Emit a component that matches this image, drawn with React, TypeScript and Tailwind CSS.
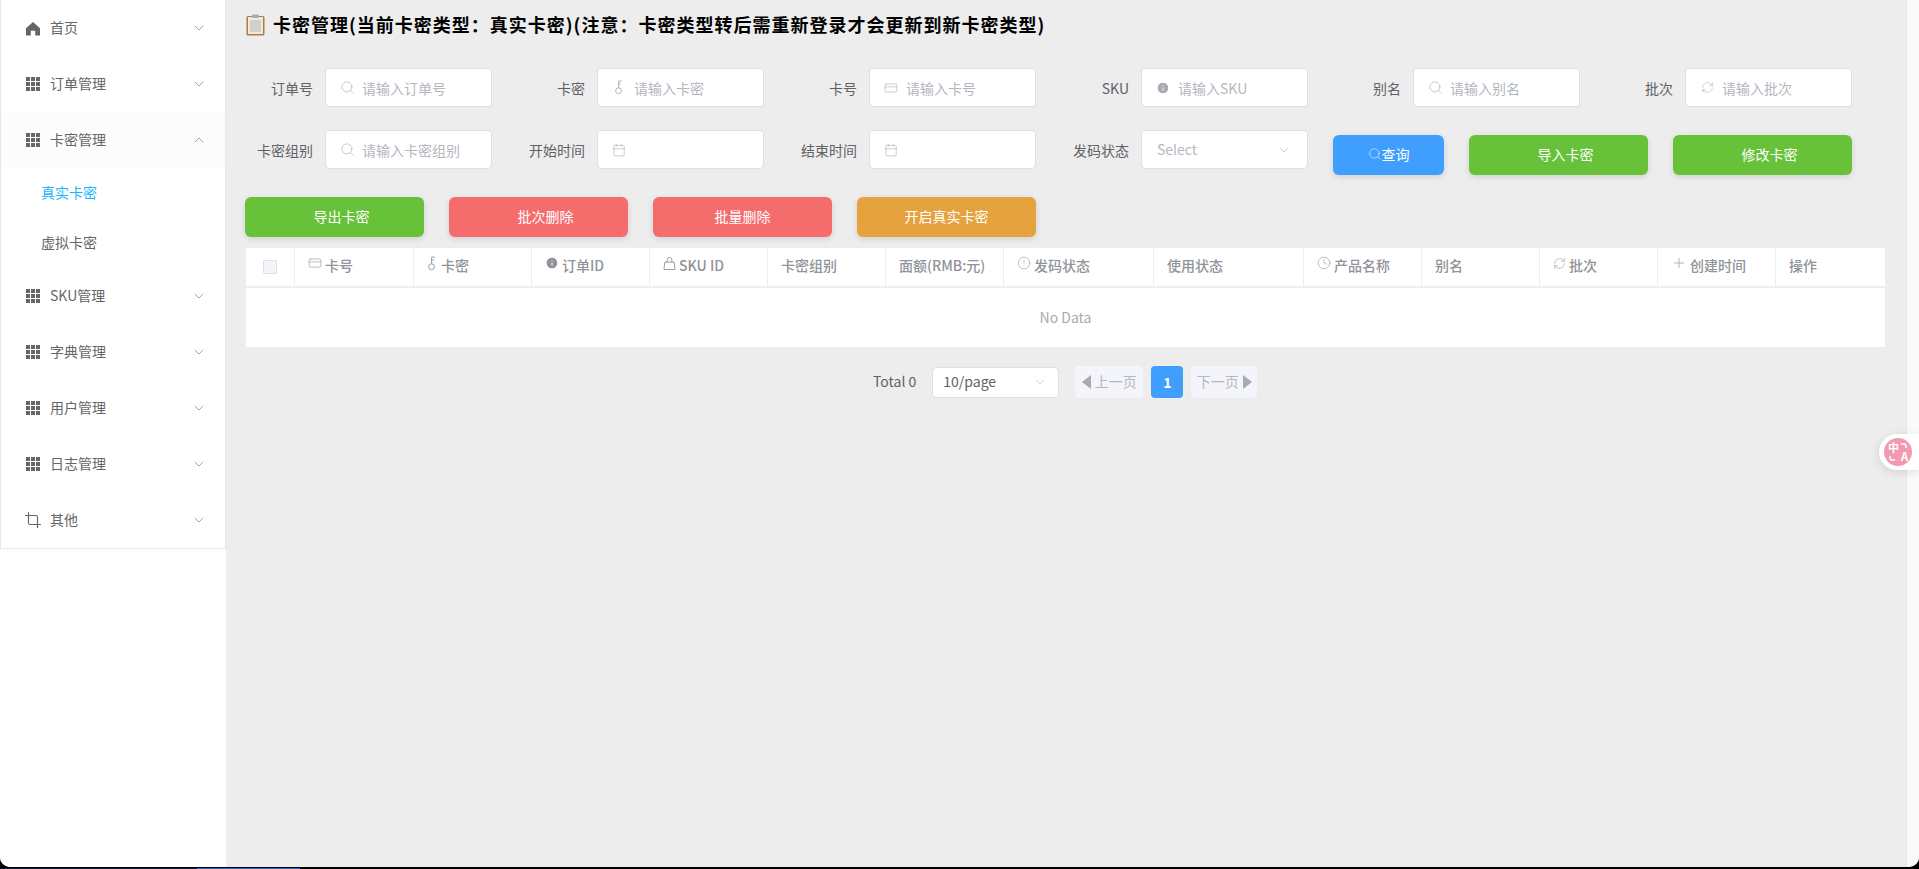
import { ChevronDown, ChevronUp, Crop, Search, CreditCard, Calendar, RefreshCw, Info, CircleAlert, Clock, Plus } from 'lucide-react'
import type { ReactNode } from 'react'

const cjk = "font-['Noto_Sans_CJK_SC',sans-serif]"

function Grid({ className = 'w-[14px] h-[14px]' }: { className?: string }) {
  return (
    <svg viewBox="0 0 14 14" className={className} fill="#666">
      {[0, 5, 10].map((y) =>
        [0, 5, 10].map((x) => <rect key={`${x}-${y}`} x={x} y={y} width="4" height="4" />),
      )}
    </svg>
  )
}

function Home() {
  return (
    <svg viewBox="0 0 14 14" className="w-[15px] h-[15px]" fill="#666">
      <path d="M7 .5 14 6.8V14H9.2V9.2H4.8V14H0V6.8Z" />
    </svg>
  )
}

function Key({ className }: { className?: string }) {
  return (
    <svg viewBox="0 0 12 16" className={className} fill="none" stroke="currentColor" strokeWidth="1">
      <circle cx="5" cy="11.5" r="3.2" />
      <path d="M5 8.3V1H8.5M5 4H7.5" />
    </svg>
  )
}

function Bag({ className }: { className?: string }) {
  return (
    <svg viewBox="0 0 14 14" className={className} fill="none" stroke="currentColor" strokeWidth="1">
      <path d="M2 5.5h10l1 8H1Z" />
      <path d="M4.5 5.5V3a2.5 2.5 0 0 1 5 0v2.5" />
    </svg>
  )
}

function MenuRow({ icon, label, open, active }: { icon: ReactNode; label: string; open?: boolean; active?: boolean }) {
  return (
    <div className={`flex items-center h-14 pl-[25px] pr-[18px] text-sm text-[#666] ${active ? 'bg-[#fcfcfc]' : ''}`}>
      <span className="w-[14px] flex justify-center mr-[10px]">{icon}</span>
      <span className="flex-1 -mt-[2px]">{label}</span>
      {open ? <ChevronUp className="w-4 h-4 text-[#777]" strokeWidth={1} /> : <ChevronDown className="w-4 h-4 text-[#777]" strokeWidth={1} />}
    </div>
  )
}

function Sidebar() {
  return (
    <aside className="w-[226px] shrink-0 bg-white">
      <div className="h-[549px] border border-t-0 border-[#e8e8e8] bg-white">
        <MenuRow icon={<Home />} label="首页" />
        <MenuRow icon={<Grid />} label="订单管理" />
        <MenuRow icon={<Grid />} label="卡密管理" open active />
        <div className="flex items-center h-[50px] pl-[40px] pb-[2px] text-sm text-[#1cb5ff]">真实卡密</div>
        <div className="flex items-center h-[50px] pl-[40px] pb-[2px] text-sm text-[#666]">虚拟卡密</div>
        <MenuRow icon={<Grid />} label="SKU管理" />
        <MenuRow icon={<Grid />} label="字典管理" />
        <MenuRow icon={<Grid />} label="用户管理" />
        <MenuRow icon={<Grid />} label="日志管理" />
        <MenuRow icon={<Crop className="w-[18px] h-[18px] shrink-0" strokeWidth={1.5} />} label="其他" />
      </div>
    </aside>
  )
}

function Field({ label, children }: { label: string; children: ReactNode }) {
  return (
    <div className="flex items-center justify-end w-[272px]">
      <span className="mr-[12px] text-sm text-[#606266]">{label}</span>
      <div className="flex items-center w-[167px] h-[39px] bg-white border border-[#dcdfe6] rounded text-sm text-[#b4b7be]">
        {children}
      </div>
    </div>
  )
}

function Placeholder({ icon, text }: { icon: ReactNode; text?: string }) {
  return (
    <>
      <span className="w-4 ml-[13px] mr-[7px] flex justify-center text-[#a8abb2]">{icon}</span>
      {text}
    </>
  )
}

function Btn({ color, children, className = 'w-[179px]' }: { color: string; children: ReactNode; className?: string }) {
  return (
    <button className={`h-10 pb-[2px] rounded-md text-sm text-white shadow-[0_2px_6px_rgba(0,0,0,0.12)] flex items-center justify-center ${color} ${className}`}>
      {children}
    </button>
  )
}

const iconCls = 'w-[15px] h-[15px]'
const columns: { w: string; label?: string; icon?: ReactNode }[] = [
  { w: 'w-[49px]' },
  { w: 'w-[119px]', label: '卡号', icon: <CreditCard className="w-[14px] h-[14px]" strokeWidth={1} /> },
  { w: 'w-[118px]', label: '卡密', icon: <Key className="w-[11px] h-[15px]" /> },
  { w: 'w-[118px]', label: '订单ID', icon: <Info className="w-[14px] h-[14px]" fill="#909399" stroke="#fff" strokeWidth={1.5} /> },
  { w: 'w-[118px]', label: 'SKU ID', icon: <Bag className="w-[13px] h-[13px]" /> },
  { w: 'w-[118px]', label: '卡密组别' },
  { w: 'w-[118px]', label: '面额(RMB:元)' },
  { w: 'w-[150px]', label: '发码状态', icon: <CircleAlert className="w-[14px] h-[14px]" strokeWidth={1} /> },
  { w: 'w-[150px]', label: '使用状态' },
  { w: 'w-[118px]', label: '产品名称', icon: <Clock className="w-[14px] h-[14px]" strokeWidth={1} /> },
  { w: 'w-[118px]', label: '别名' },
  { w: 'w-[118px]', label: '批次', icon: <RefreshCw className="w-[13px] h-[13px]" strokeWidth={1} /> },
  { w: 'w-[118px]', label: '创建时间', icon: <Plus className="w-4 h-4" strokeWidth={1} /> },
  { w: 'flex-1', label: '操作' },
]

function CardTable() {
  return (
    <div className="w-[1639px] bg-white mt-[11px]">
      <div className="flex h-10 border-b-2 border-[#ebeef5]">
        {columns.map((c, i) => (
          <div
            key={i}
            className={`${c.w} flex items-center gap-[3px] text-sm font-medium text-[#909399] border-r border-[#ebeef5] last:border-r-0 ${i === 0 ? 'justify-center' : 'pl-[13px] pb-[4px]'}`}
          >
            {i === 0 && <span className="w-[14px] h-[14px] bg-[#f4f5fa] border border-[#dcdfe6] rounded-[2px]" />}
            {c.icon && <span className="flex -mt-1 text-[#909399]">{c.icon}</span>}
            {c.label}
          </div>
        ))}
      </div>
      <div className="h-[59px] pb-[2px] flex items-center justify-center text-sm text-[#a8abb2]">No Data</div>
    </div>
  )
}

function Pager() {
  return (
    <div className="flex items-center ml-[627px] mt-[19px] text-sm">
      <span className="text-[#606266] mr-4 -mt-[2px]">Total 0</span>
      <div className="flex items-center justify-between w-[127px] h-[31px] bg-white border border-[#dcdfe6] rounded pl-[10px] pr-[11px] text-[#606266] mr-4">
        <span className="-mt-[2px]">10/page</span>
        <ChevronDown className="w-[14px] h-[14px] text-[#b4b7be]" strokeWidth={1} />
      </div>
      <div className="flex items-center justify-center gap-[4px] w-[68px] h-8 rounded-sm bg-[#f4f5fa] text-sm text-[#b4b7be]">
        <span className="w-0 h-0 border-y-[7px] border-y-transparent border-r-[9px] border-r-[#a8abb2]" />
        <span className="-mt-[2px]">上一页</span>
      </div>
      <div className="flex items-center justify-center w-8 h-8 mx-2 rounded-sm bg-[#409eff] text-white font-bold text-sm">1</div>
      <div className="flex items-center justify-center gap-[4px] w-[66px] h-8 rounded-sm bg-[#f4f5fa] text-sm text-[#b4b7be]">
        <span className="-mt-[2px]">下一页</span>
        <span className="w-0 h-0 border-y-[7px] border-y-transparent border-l-[9px] border-l-[#a8abb2]" />
      </div>
    </div>
  )
}

function ClipboardIcon() {
  return (
    <svg viewBox="0 0 19 22" className="w-[19px] h-[22px]">
      <rect x="0.5" y="2" width="18" height="19.5" rx="1.5" fill="#b07a3c" />
      <rect x="2" y="3" width="15" height="17" fill="#eceae4" />
      <rect x="4" y="6" width="11" height="12" fill="#cfcfcc" />
      <rect x="6" y="0.5" width="7" height="3.5" rx="1" fill="#a8adb2" />
    </svg>
  )
}

function TranslateWidget() {
  return (
    <div className="absolute right-0 top-[434px] w-10 h-9 bg-white rounded-l-[18px] shadow-[0_2px_10px_rgba(0,0,0,0.12)] pl-[5px] flex items-center">
      <div className="relative w-7 h-7 rounded-full bg-[#f29ab2] text-white">
        <span className="absolute left-[4px] top-[3px] text-[11px] leading-[12px] font-bold">中</span>
        <span className="absolute right-[4px] bottom-[4px] text-[11px] leading-[11px] font-bold">A</span>
        <svg viewBox="0 0 28 28" className="absolute inset-0" fill="none" stroke="#fff" strokeWidth="1.5">
          <path d="M17 6h3a2 2 0 0 1 2 2v2" />
          <path d="M6 18v2a2 2 0 0 0 2 2h3" />
        </svg>
      </div>
    </div>
  )
}

export default function App() {
  return (
    <div className={`h-[869px] w-[1919px] bg-black overflow-hidden ${cjk}`}>
      <div className="relative flex h-[867px] rounded-b-[10px] overflow-hidden bg-[#ededed]">
        <Sidebar />
        <main className="flex-1 pl-[20px]">
          <div className="flex items-center h-[50px] gap-[8px] text-[18px] font-semibold text-black tracking-[1px]">
            <ClipboardIcon />
            <span className="-mt-[2px]">卡密管理(当前卡密类型：真实卡密)(注意：卡密类型转后需重新登录才会更新到新卡密类型)</span>
          </div>
          <div className="flex -ml-[26px] mt-[18px]">
            <Field label="订单号"><Placeholder icon={<Search className={iconCls} strokeWidth={1} />} text="请输入订单号" /></Field>
            <Field label="卡密"><Placeholder icon={<Key className="w-[11px] h-[15px]" />} text="请输入卡密" /></Field>
            <Field label="卡号"><Placeholder icon={<CreditCard className="w-[14px] h-[14px]" strokeWidth={1} />} text="请输入卡号" /></Field>
            <Field label="SKU"><Placeholder icon={<Info className="w-[14px] h-[14px]" fill="#a8abb2" stroke="#fff" strokeWidth={1.5} />} text="请输入SKU" /></Field>
            <Field label="别名"><Placeholder icon={<Search className={iconCls} strokeWidth={1} />} text="请输入别名" /></Field>
            <Field label="批次"><Placeholder icon={<RefreshCw className="w-[13px] h-[13px]" strokeWidth={1} />} text="请输入批次" /></Field>
          </div>
          <div className="flex items-start -ml-[26px] mt-[23px]">
            <Field label="卡密组别"><Placeholder icon={<Search className={iconCls} strokeWidth={1} />} text="请输入卡密组别" /></Field>
            <Field label="开始时间"><Placeholder icon={<Calendar className="w-[14px] h-[14px]" strokeWidth={1} />} /></Field>
            <Field label="结束时间"><Placeholder icon={<Calendar className="w-[14px] h-[14px]" strokeWidth={1} />} /></Field>
            <Field label="发码状态">
              <span className="flex-1 pl-[15px] -mt-[2px]">Select</span>
              <ChevronDown className="w-4 h-4 mr-[15px] text-[#b4b7be]" strokeWidth={1} />
            </Field>
            <div className="flex gap-[25px] ml-[25px] mt-[5px]">
              <Btn color="bg-[#409eff]" className="w-[111px]">
                <Search className="w-[14px] h-[14px]" strokeWidth={1} />
                查询
              </Btn>
              <Btn color="bg-[#67c23a]" className="w-[179px] pl-[14px]">导入卡密</Btn>
              <Btn color="bg-[#67c23a]" className="w-[179px] pl-[14px]">修改卡密</Btn>
            </div>
          </div>
          <div className="flex gap-[25px] -ml-px mt-[22px]">
            <Btn color="bg-[#67c23a]" className="w-[179px] pl-[14px]">导出卡密</Btn>
            <Btn color="bg-[#f56c6c]" className="w-[179px] pl-[14px]">批次删除</Btn>
            <Btn color="bg-[#f56c6c]">批量删除</Btn>
            <Btn color="bg-[#e6a23c]">开启真实卡密</Btn>
          </div>
          <CardTable />
          <Pager />
        </main>
        <div className="w-[13px] shrink-0 bg-[#fafafa] border-l border-[#e8e8e8]" />
        <TranslateWidget />
      </div>
      <div className="flex h-px mt-px">
        <div className="w-[197px] bg-[#0b1a3a]" />
        <div className="w-[103px] bg-[#3a6ab0]" />
      </div>
    </div>
  )
}
